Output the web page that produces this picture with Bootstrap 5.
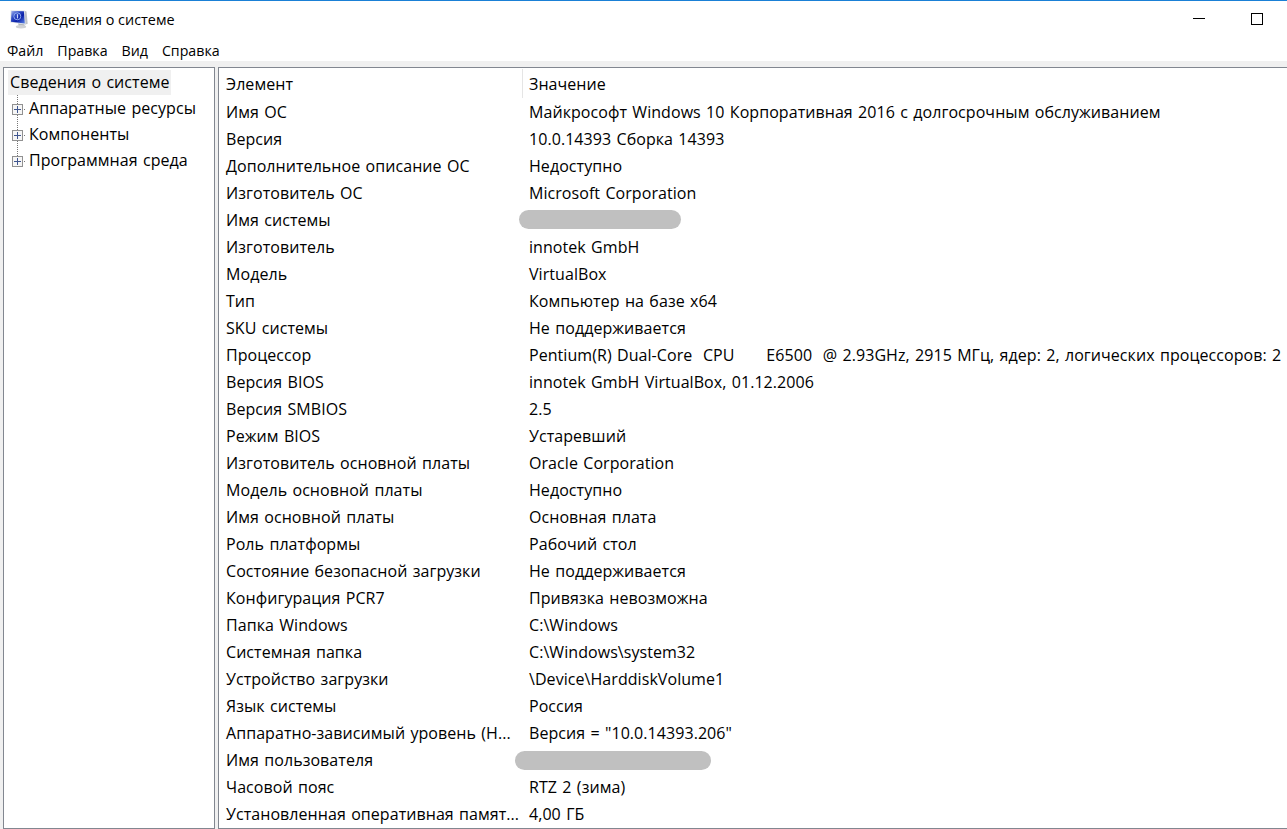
<!DOCTYPE html>
<html lang="ru">
<head>
<meta charset="utf-8">
<meta name="viewport" content="width=device-width, initial-scale=1">
<title>Сведения о системе</title>
<link href="https://cdn.jsdelivr.net/npm/bootstrap@5.3.0/dist/css/bootstrap.min.css" rel="stylesheet">
<style>
body{font-family:"Open Sans","Noto Sans",sans-serif;font-size:16px;color:#000;background:#fff}
.win{border-top:1px solid #1a80d6}
.titlebar{height:37px;padding-left:9px;font-size:14.4px}
.caption-text{margin-left:5px}
.caption-buttons{margin-bottom:2px}
.menubar{height:23px;padding:2px 0 0 7px;font-size:14.2px;gap:14px}
.workspace{background:#f0f0f0;padding:6px 0 0 3px;gap:3px;min-height:0}
.pane{background:#fff;border:1px solid #828790;word-spacing:1.1px;letter-spacing:.06px}
.tree{width:212px;padding:2px 0 0 4px}
.tree-root{height:25px;background:#f0f0f0;padding:0 2px;width:163px;line-height:25px}
.node{height:26px;gap:4px;line-height:26px}
.details{border-right:0;padding-top:1px;min-width:0}
.line{height:27px;line-height:29px}
.line.head{height:29px;line-height:31px}
.name{width:304px;padding-left:7px;flex:none;border-right:1px solid transparent}
.head .name{border-color:#e5e5e5}
.value{padding-left:6px;white-space:pre}
.redacted{background:#c0c0c0;height:19px;align-self:center}
.redacted-system{width:162px;margin-left:-4px}
.redacted-user{width:196px;margin:1px 0 0 -8px}
</style>
</head>
<body>
<div class="win vh-100 d-flex flex-column overflow-hidden">
  <header class="titlebar d-flex align-items-center flex-shrink-0">
    <svg width="20" height="20" viewBox="0 0 20 20">
      <defs><linearGradient id="scr" x1="0" y1="0" x2="1" y2="1"><stop offset="0" stop-color="#a9b8ee"/><stop offset=".3" stop-color="#3452c8"/><stop offset=".6" stop-color="#0a1fa8"/><stop offset="1" stop-color="#5c86e8"/></linearGradient></defs>
      <path d="M9 13h6l1 4-6 0z" fill="#b3b7bc"/><ellipse cx="12" cy="16.7" rx="5.2" ry="1.7" fill="#d0d2d4"/>
      <path d="M15.3.8l2.2.6 1.2 12.4-3 1z" fill="#bcc0c6"/>
      <path d="M1.6.2L15.6.4 16.6 14.6 1.2 12.6z" fill="#dfe3ea"/>
      <path d="M2.4 1L14.9 1.2 15.8 13.6 2 11.7z" fill="url(#scr)"/>
      <circle cx="8.3" cy="6.3" r="3.5" fill="none" stroke="#8ea8ee"/><path d="M8.5 4.2v4.2" stroke="#c5d3fa" stroke-width="1.2"/>
    </svg>
    <span class="caption-text">Сведения о системе</span>
    <svg class="caption-buttons ms-auto" width="94" height="30" viewBox="0 0 94 30" fill="none" stroke="#000" shape-rendering="crispEdges"><path d="M0 14.5h12"/><path d="M58.5 9.5h11v11h-11z"/></svg>
  </header>
  <nav class="menubar d-flex align-items-center flex-shrink-0"><span>Файл</span><span>Правка</span><span>Вид</span><span>Справка</span></nav>
  <main class="workspace d-flex flex-grow-1">
    <aside class="pane tree flex-shrink-0 text-nowrap">
      <div class="tree-root">Сведения о системе</div>
      <div class="node d-flex"><svg class="flex-shrink-0" width="17" height="26" viewBox="0 0 17 26" fill="none" shape-rendering="crispEdges"><path d="M9.5 0v26M16 14.5h1" stroke="#777" stroke-dasharray="1 1"/><path d="M4.5 9.5h10v10h-10z" fill="#f6f6f6" stroke="#919191"/><path d="M6 14.5h7M9.5 11v7" stroke="#40568f"/></svg><span>Аппаратные ресурсы</span></div>
      <div class="node d-flex"><svg class="flex-shrink-0" width="17" height="26" viewBox="0 0 17 26" fill="none" shape-rendering="crispEdges"><path d="M9.5 0v26M16 14.5h1" stroke="#777" stroke-dasharray="1 1"/><path d="M4.5 9.5h10v10h-10z" fill="#f6f6f6" stroke="#919191"/><path d="M6 14.5h7M9.5 11v7" stroke="#40568f"/></svg><span>Компоненты</span></div>
      <div class="node d-flex"><svg class="flex-shrink-0" width="17" height="26" viewBox="0 0 17 26" fill="none" shape-rendering="crispEdges"><path d="M9.5 0v14M16 14.5h1" stroke="#777" stroke-dasharray="1 1"/><path d="M4.5 9.5h10v10h-10z" fill="#f6f6f6" stroke="#919191"/><path d="M6 14.5h7M9.5 11v7" stroke="#40568f"/></svg><span>Программная среда</span></div>
    </aside>
    <section class="pane details flex-grow-1 text-nowrap">
      <div class="line head d-flex"><div class="name">Элемент</div><div class="value">Значение</div></div>
      <div class="line d-flex"><div class="name">Имя ОС</div><div class="value">Майкрософт Windows 10 Корпоративная 2016 с долгосрочным обслуживанием</div></div>
      <div class="line d-flex"><div class="name">Версия</div><div class="value">10.0.14393 Сборка 14393</div></div>
      <div class="line d-flex"><div class="name">Дополнительное описание ОС</div><div class="value">Недоступно</div></div>
      <div class="line d-flex"><div class="name">Изготовитель ОС</div><div class="value">Microsoft Corporation</div></div>
      <div class="line d-flex"><div class="name">Имя системы</div><div class="redacted redacted-system rounded-pill"></div></div>
      <div class="line d-flex"><div class="name">Изготовитель</div><div class="value">innotek GmbH</div></div>
      <div class="line d-flex"><div class="name">Модель</div><div class="value">VirtualBox</div></div>
      <div class="line d-flex"><div class="name">Тип</div><div class="value">Компьютер на базе x64</div></div>
      <div class="line d-flex"><div class="name">SKU системы</div><div class="value">Не поддерживается</div></div>
      <div class="line d-flex"><div class="name">Процессор</div><div class="value">Pentium(R) Dual-Core  CPU      E6500  @ 2.93GHz, 2915 МГц, ядер: 2, логических процессоров: 2</div></div>
      <div class="line d-flex"><div class="name">Версия BIOS</div><div class="value">innotek GmbH VirtualBox, 01.12.2006</div></div>
      <div class="line d-flex"><div class="name">Версия SMBIOS</div><div class="value">2.5</div></div>
      <div class="line d-flex"><div class="name">Режим BIOS</div><div class="value">Устаревший</div></div>
      <div class="line d-flex"><div class="name">Изготовитель основной платы</div><div class="value">Oracle Corporation</div></div>
      <div class="line d-flex"><div class="name">Модель основной платы</div><div class="value">Недоступно</div></div>
      <div class="line d-flex"><div class="name">Имя основной платы</div><div class="value">Основная плата</div></div>
      <div class="line d-flex"><div class="name">Роль платформы</div><div class="value">Рабочий стол</div></div>
      <div class="line d-flex"><div class="name">Состояние безопасной загрузки</div><div class="value">Не поддерживается</div></div>
      <div class="line d-flex"><div class="name">Конфигурация PCR7</div><div class="value">Привязка невозможна</div></div>
      <div class="line d-flex"><div class="name">Папка Windows</div><div class="value">C:\Windows</div></div>
      <div class="line d-flex"><div class="name">Системная папка</div><div class="value">C:\Windows\system32</div></div>
      <div class="line d-flex"><div class="name">Устройство загрузки</div><div class="value">\Device\HarddiskVolume1</div></div>
      <div class="line d-flex"><div class="name">Язык системы</div><div class="value">Россия</div></div>
      <div class="line d-flex"><div class="name">Аппаратно-зависимый уровень (H...</div><div class="value">Версия = "10.0.14393.206"</div></div>
      <div class="line d-flex"><div class="name">Имя пользователя</div><div class="redacted redacted-user rounded-pill"></div></div>
      <div class="line d-flex"><div class="name">Часовой пояс</div><div class="value">RTZ 2 (зима)</div></div>
      <div class="line d-flex"><div class="name">Установленная оперативная памят...</div><div class="value">4,00 ГБ</div></div>
    </section>
  </main>
</div>
<script src="https://cdn.jsdelivr.net/npm/bootstrap@5.3.0/dist/js/bootstrap.bundle.min.js"></script>
</body>
</html>
